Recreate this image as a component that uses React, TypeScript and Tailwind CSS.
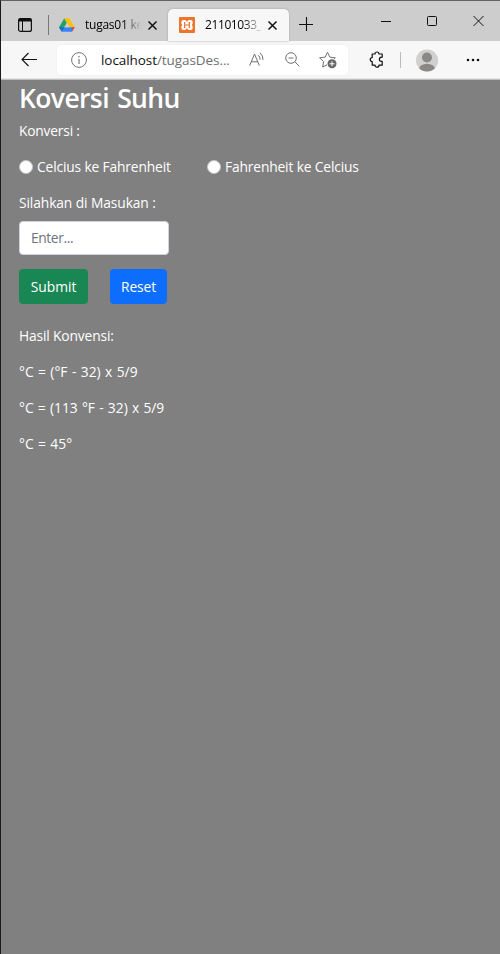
import type { ReactNode } from "react";

function CloseIcon() {
  return (
    <svg width="11" height="11" viewBox="0 0 11 11" className="shrink-0" fill="none" stroke="#111" strokeWidth="1.5">
      <path d="M1.5 1.5 9.5 9.5M9.5 1.5 1.5 9.5" />
    </svg>
  );
}

function DriveIcon() {
  return (
    <svg width="16" height="14" viewBox="0 0 16 14" className="shrink-0">
      <path d="M5.3 0.3 8 5 3 13.6 0 9.2Z" fill="#1fa463" />
      <path d="M5.3 0.3h5.2L15.6 9.2h-5.2Z" fill="#ffc107" />
      <path d="M5.3 9.2h10.3L13 13.7H2.7Z" fill="#3b82f6" />
      <path d="M5.3 9.2 2.7 13.7 0 9.2Z" fill="#1967d2" />
      <path d="M12.8 9.2h2.8L13.3 13.3Z" fill="#ea4335" />
      <path d="M5.3 9.2 8 4.7l2.5 4.5Z" fill="#cdcdcd" />
    </svg>
  );
}

function XamppIcon() {
  return (
    <svg width="16" height="16" viewBox="0 0 16 16" className="shrink-0">
      <rect width="16" height="16" rx="1" fill="#ee762a" />
      <path
        d="M4.600 3h1.700L8 4.800 9.700 3h1.700a2.300 2.300 0 0 1 2.300 2.300v1L12.900 8l.8 1.700v1a2.300 2.300 0 0 1-2.300 2.300H9.700L8 11.200 6.300 13H4.600a2.300 2.300 0 0 1-2.300-2.300v-1L3.100 8l-.8-1.700v-1A2.300 2.300 0 0 1 4.600 3Z"
        fill="#fff"
      />
      <path d="M5 5.700h.7v4.600H5M11 5.700h-.7v4.600h.7M5.700 8h4.600" fill="none" stroke="#ee762a" strokeWidth="1.200" />
    </svg>
  );
}

function TabStrip() {
  return (
    <div className="flex h-[40px] bg-[#cdcdcd]">
      <div className="flex h-full w-[47px] items-center pt-2 pl-[17px]">
        <svg width="14" height="14" viewBox="0 0 14 14" fill="none" stroke="#111">
          <rect x=".6" y=".6" width="12.800" height="12.800" rx="2" strokeWidth="1.2" />
          <path d="M.7 2h12.600" strokeWidth="3" />
          <path d="M4.500 3v10" strokeWidth="1" />
        </svg>
      </div>
      <div className="mt-[14px] h-5 w-px shrink-0 bg-[#777]" />
      <div className="flex w-[119px] items-center pt-2 pl-[10px]">
        <DriveIcon />
        <span className="ml-[10px] w-[58px] shrink-0 bg-gradient-to-r from-black from-65% to-transparent to-97% bg-clip-text text-[12px] leading-4 tracking-[-0.25px] whitespace-nowrap text-transparent">
          tugas01 ke
        </span>
        <span className="ml-[4px] flex"><CloseIcon /></span>
      </div>
      <div className="mt-2 flex h-8 w-[121px] shrink-0 items-center rounded-t-[5px] bg-[#f7f7f7] pl-[11px] shadow-[0_0_2px_#999]">
        <XamppIcon />
        <span className="ml-[10px] w-[58px] shrink-0 bg-gradient-to-r from-black from-65% to-transparent to-100% bg-clip-text text-[12px] leading-4 tracking-[-0.4px] whitespace-nowrap text-transparent">
          21101033_
        </span>
        <span className="ml-[4px] flex"><CloseIcon /></span>
      </div>
      <svg width="14" height="14" viewBox="0 0 14 14" className="mt-[16px] ml-[10px]" stroke="#111">
        <path d="M7.500 0v14M0 7.500h14" strokeWidth="1.100" />
      </svg>
      <div className="ml-auto flex items-start gap-[36px] pt-[14px] pr-[16px]">
        <svg width="10" height="12" viewBox="0 0 10 12" stroke="#111"><path d="M0 6.500h10" /></svg>
        <svg width="10" height="12" viewBox="0 0 10 12" stroke="#111" fill="none"><rect x=".5" y="1.500" width="9" height="9" rx="1" /></svg>
        <svg width="11" height="12" viewBox="0 0 11 12" stroke="#111" fill="none"><path d="m.5 1 10 10M10.500 1l-10 10" /></svg>
      </div>
    </div>
  );
}

function AddressBar() {
  return (
    <div className="flex h-[37px] items-center bg-[#f7f7f7]">
      <svg width="17" height="15" viewBox="0 0 17 15" className="ml-[20px]" fill="none" stroke="#111" strokeWidth="1.100">
        <path d="M16 7.500H.8M7.500 1 1 7.500 7.500 14" />
      </svg>
      <div className="ml-[19px] flex h-[30px] w-[291px] items-center rounded-[4px] bg-white pl-[14px] shadow-[0_0_2px_#e8e8e8]">
        <svg width="16" height="16" viewBox="0 0 16 16" fill="none" stroke="#767676" className="mt-px shrink-0">
          <circle cx="8" cy="8" r="7.400" />
          <path d="M8 7v5" strokeWidth="1.200" />
          <circle cx="8" cy="4.700" r=".8" fill="#767676" stroke="none" />
        </svg>
        <span className="ml-[14px] w-[148px] shrink-0 pt-px whitespace-nowrap text-[13.500px] tracking-[-0.07px] text-[#707070]">
          <span className="text-[#111]">localhost</span>/tugasDes...
        </span>
        <svg width="16" height="15" viewBox="0 0 16 15" fill="none" stroke="#707070" className="shrink-0">
          <path d="m.6 13.700 4.900-11.700 4.900 11.700M2.300 9.800h6.400M9.300 3.300a5 5 0 0 1 1.700 4.300M11 .900a8.500 8.500 0 0 1 3 7" />
        </svg>
        <svg width="15" height="15" viewBox="0 0 15 15" fill="none" stroke="#707070" className="ml-5 shrink-0">
          <circle cx="6" cy="6" r="5.300" />
          <path d="M3.500 6h5M9.900 9.900l4.500 4.500" />
        </svg>
        <svg width="19" height="18" viewBox="0 0 19 18" fill="none" stroke="#707070" className="ml-[19px] shrink-0">
          <path d="m8.500 1.200 2.300 4.900 5.500.7-4 3.800 1 5.400-4.800-2.600L3.700 16l.9-5.400-4-3.800 5.600-.7Z" strokeLinejoin="round" />
          <circle cx="13" cy="12.800" r="5.300" fill="#fff" stroke="none" />
          <circle cx="13" cy="12.800" r="4.500" fill="#666" stroke="none" />
          <path d="M10.500 12.800h5M13 10.300v5" stroke="#fff" />
        </svg>
      </div>
      <svg width="16" height="17" viewBox="0 0 16 17" className="ml-[21px]" fill="none" stroke="#111" strokeWidth="1.200" strokeLinejoin="round">
        <path d="M3.200 3h2.800a2 2 0 0 1 4 0h3.200v3.200h-.7a2.100 2.100 0 0 0 0 4.200h.7v3.800H10a2 2 0 0 1-4 0H3.200v-3.600a2 2 0 0 1 0-4Z" />
      </svg>
      <div className="ml-[15px] h-4 w-px bg-[#bbb]" />
      <svg width="23" height="23" viewBox="0 0 23 23" className="mt-px ml-[15px]">
        <clipPath id="avatar"><circle cx="11" cy="11.500" r="11.100" /></clipPath>
        <g clipPath="url(#avatar)">
          <rect width="23" height="23" fill="#d2d0ce" />
          <circle cx="11" cy="8.500" r="5" fill="#8a8886" />
          <ellipse cx="11" cy="20" rx="8" ry="5.200" fill="#8a8886" />
        </g>
      </svg>
      <svg width="14" height="4" viewBox="0 0 14 4" className="mt-px ml-[27px]" fill="#111">
        <circle cx="2" cy="2" r="1.300" /><circle cx="7" cy="2" r="1.300" /><circle cx="12" cy="2" r="1.300" />
      </svg>
    </div>
  );
}

function Radio({ children }: { children: ReactNode }) {
  return (
    <label className="flex items-center">
      <span className="mr-1 size-[14px] rounded-full border border-[#c4c4c4] bg-white" />
      {children}
    </label>
  );
}

export default function App() {
  return (
    <div className="h-[954px] w-[500px] overflow-hidden border-t border-l border-t-[#626262] border-l-[#1b1919] bg-[#808080] font-['Open_Sans',sans-serif]">
      <TabStrip />
      <AddressBar />
      <div className="h-px bg-[#e5e5e5]" />
      <div className="h-px bg-[#c0c0c0]" />
      <main className="flex flex-col items-start pl-[18px] text-[13.800px] leading-[22px] whitespace-nowrap text-white">
        <h1 className="h-[40px] text-[26.500px] leading-[36px] font-semibold tracking-[-0.620px] [word-spacing:2px]">Koversi Suhu</h1>
        <p className="mb-[14px] tracking-[-0.2px]">Konversi :</p>
        <div className="mb-[14px] flex">
          <div className="w-[188px] tracking-[-0.150px]"><Radio>Celcius ke Fahrenheit</Radio></div>
          <div className="tracking-[-0.150px]"><Radio>Fahrenheit ke Celcius</Radio></div>
        </div>
        <p className="tracking-[-0.1px]">Silahkan di Masukan :</p>
        <input
          placeholder="Enter..."
          className="mt-[7px] h-[34px] w-[150px] rounded-[4px] border border-[#ced4da] bg-white px-[11px] pb-[2px] tracking-[-0.4px] text-[#212529] placeholder:text-[#6c757d]"
        />
        <div className="mt-[14px] flex gap-[22px]">
          <button className="h-[35px] w-[69px] rounded-[4px] bg-[#198754]">Submit</button>
          <button className="h-[35px] w-[57px] rounded-[4px] bg-[#0d6efd] tracking-[-0.1px]">Reset</button>
        </div>
        <div className="mt-[21px] flex flex-col items-start gap-[14px]">
          <p className="tracking-[-0.15px]">Hasil Konvensi:</p>
          <p className="[word-spacing:0.850px]">°C = (°F - 32) x 5/9</p>
          <p className="[word-spacing:0.650px]">°C = (113 °F - 32) x 5/9</p>
          <p className="[word-spacing:0.850px]">°C = 45°</p>
        </div>
      </main>
    </div>
  );
}
